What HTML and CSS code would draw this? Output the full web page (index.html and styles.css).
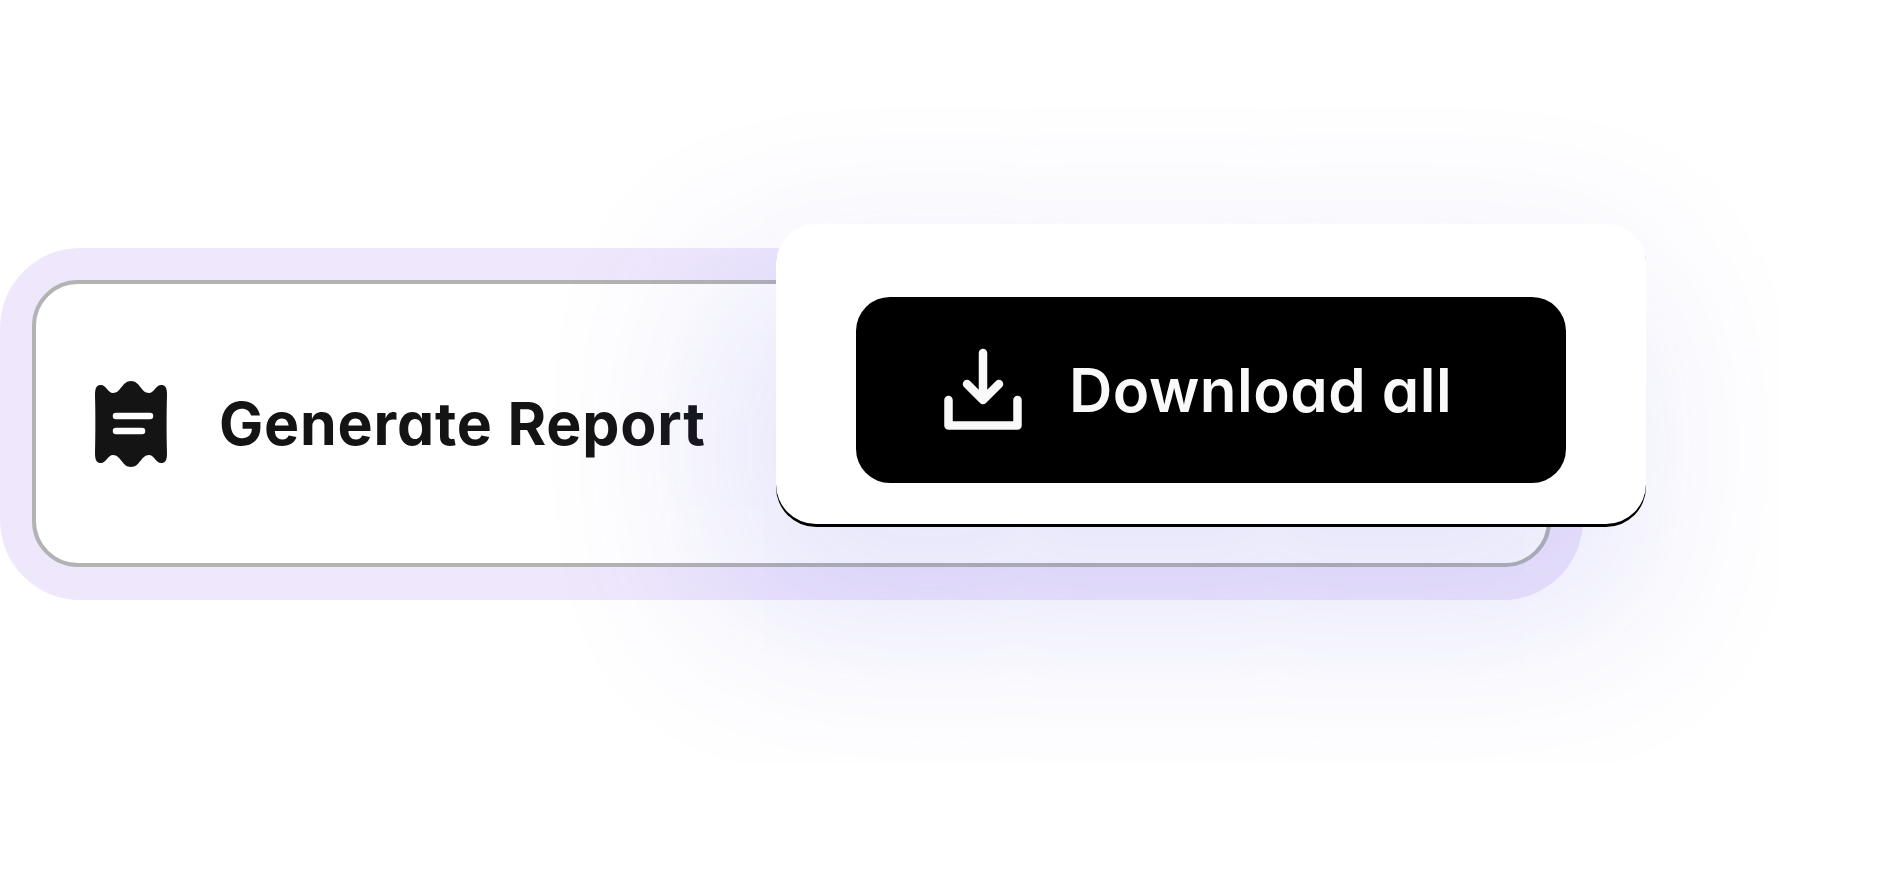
FILE: index.html
```html
<!DOCTYPE html>
<html lang="en">
<head>
	<meta charset="UTF-8">
	<meta name="viewport" content="width=device-width, initial-scale=1.0">
	<title>Download all</title>
	<link rel="stylesheet" href="styles.css">
</head>
<body>
	<div class="stage">
		<div class="report-frame">
			<div class="report-row">
				<svg class="receipt-icon" width="72" height="86" viewBox="0 0 72 86">
					<path fill="#141414" d="M0 14C0 6 2 4 6 4C11 4 13 12 18 12C26 12 27 0 36 0C45 0 46 12 54 12C59 12 61 4 66 4C70 4 72 6 72 14C71.500 30 71.500 56 72 72C72 80 70 82 66 82C61 82 59 74 54 74C46 74 45 86 36 86C27 86 26 74 18 74C13 74 11 82 6 82C2 82 0 80 0 72C.5 56 .5 30 0 14Z"/>
					<path fill="none" stroke="#fff" stroke-width="6.500" stroke-linecap="round" d="M21 35H55M21 50H47"/>
				</svg>
				<span class="report-label">Generate Report</span>
			</div>
		</div>
		<div class="download-card">
			<div class="download-btn">
				<svg class="download-icon" width="78" height="84" viewBox="0 0 78 84">
					<path fill="none" stroke="#f9f9f9" stroke-width="8.500" stroke-linecap="round" stroke-linejoin="round" d="M39 5V52M23 36L39 52L55 36M4.500 52V77.500H73.500V52"/>
				</svg>
				<span class="download-label">Download all</span>
			</div>
		</div>
	</div>
</body>
</html>
```
FILE: styles.css
```css
html, body {
	margin: 0;
	height: 100%;
	background: #fff;
	overflow: hidden;
}
.stage {
	position: relative;
	height: 887px;
	padding-top: 248px;
	box-sizing: border-box;
	font-family: Inter, "Liberation Sans", sans-serif;
	font-feature-settings: "cv11";
}
/* lavender ring round the report row */
.report-frame {
	width: 1583px;
	height: 352px;
	padding: 32px;
	box-sizing: border-box;
	background: #efe8fc;
	border-radius: 80px;
}
.report-row {
	display: flex;
	align-items: center;
	gap: 52px;
	height: 287px;
	padding-left: 59px;
	box-sizing: border-box;
	background: #fff;
	border: 4px solid #b3b3b3;
	border-radius: 46px;
}
.report-label {
	font-size: 59px;
	font-weight: 700;
	color: #141414;
	letter-spacing: .8px;
}
/* floating card, sits over the frame */
.download-card {
	position: absolute;
	left: 776px;
	top: 224px;
	width: 870px;
	height: 303px;
	padding: 73px 80px 0;
	box-sizing: border-box;
	background: #fff;
	border-radius: 40px;
	box-shadow: inset 0 -3px 0 #000, -38px 70px 170px 28px rgba(90, 80, 230, .15);
}
.download-btn {
	display: flex;
	align-items: center;
	gap: 47px;
	height: 186px;
	padding-left: 88px;
	background: #000;
	border-radius: 34px;
}
.download-label {
	font-size: 60px;
	font-weight: 600;
	color: #f9f9f9;
	letter-spacing: .5px;
}
```
